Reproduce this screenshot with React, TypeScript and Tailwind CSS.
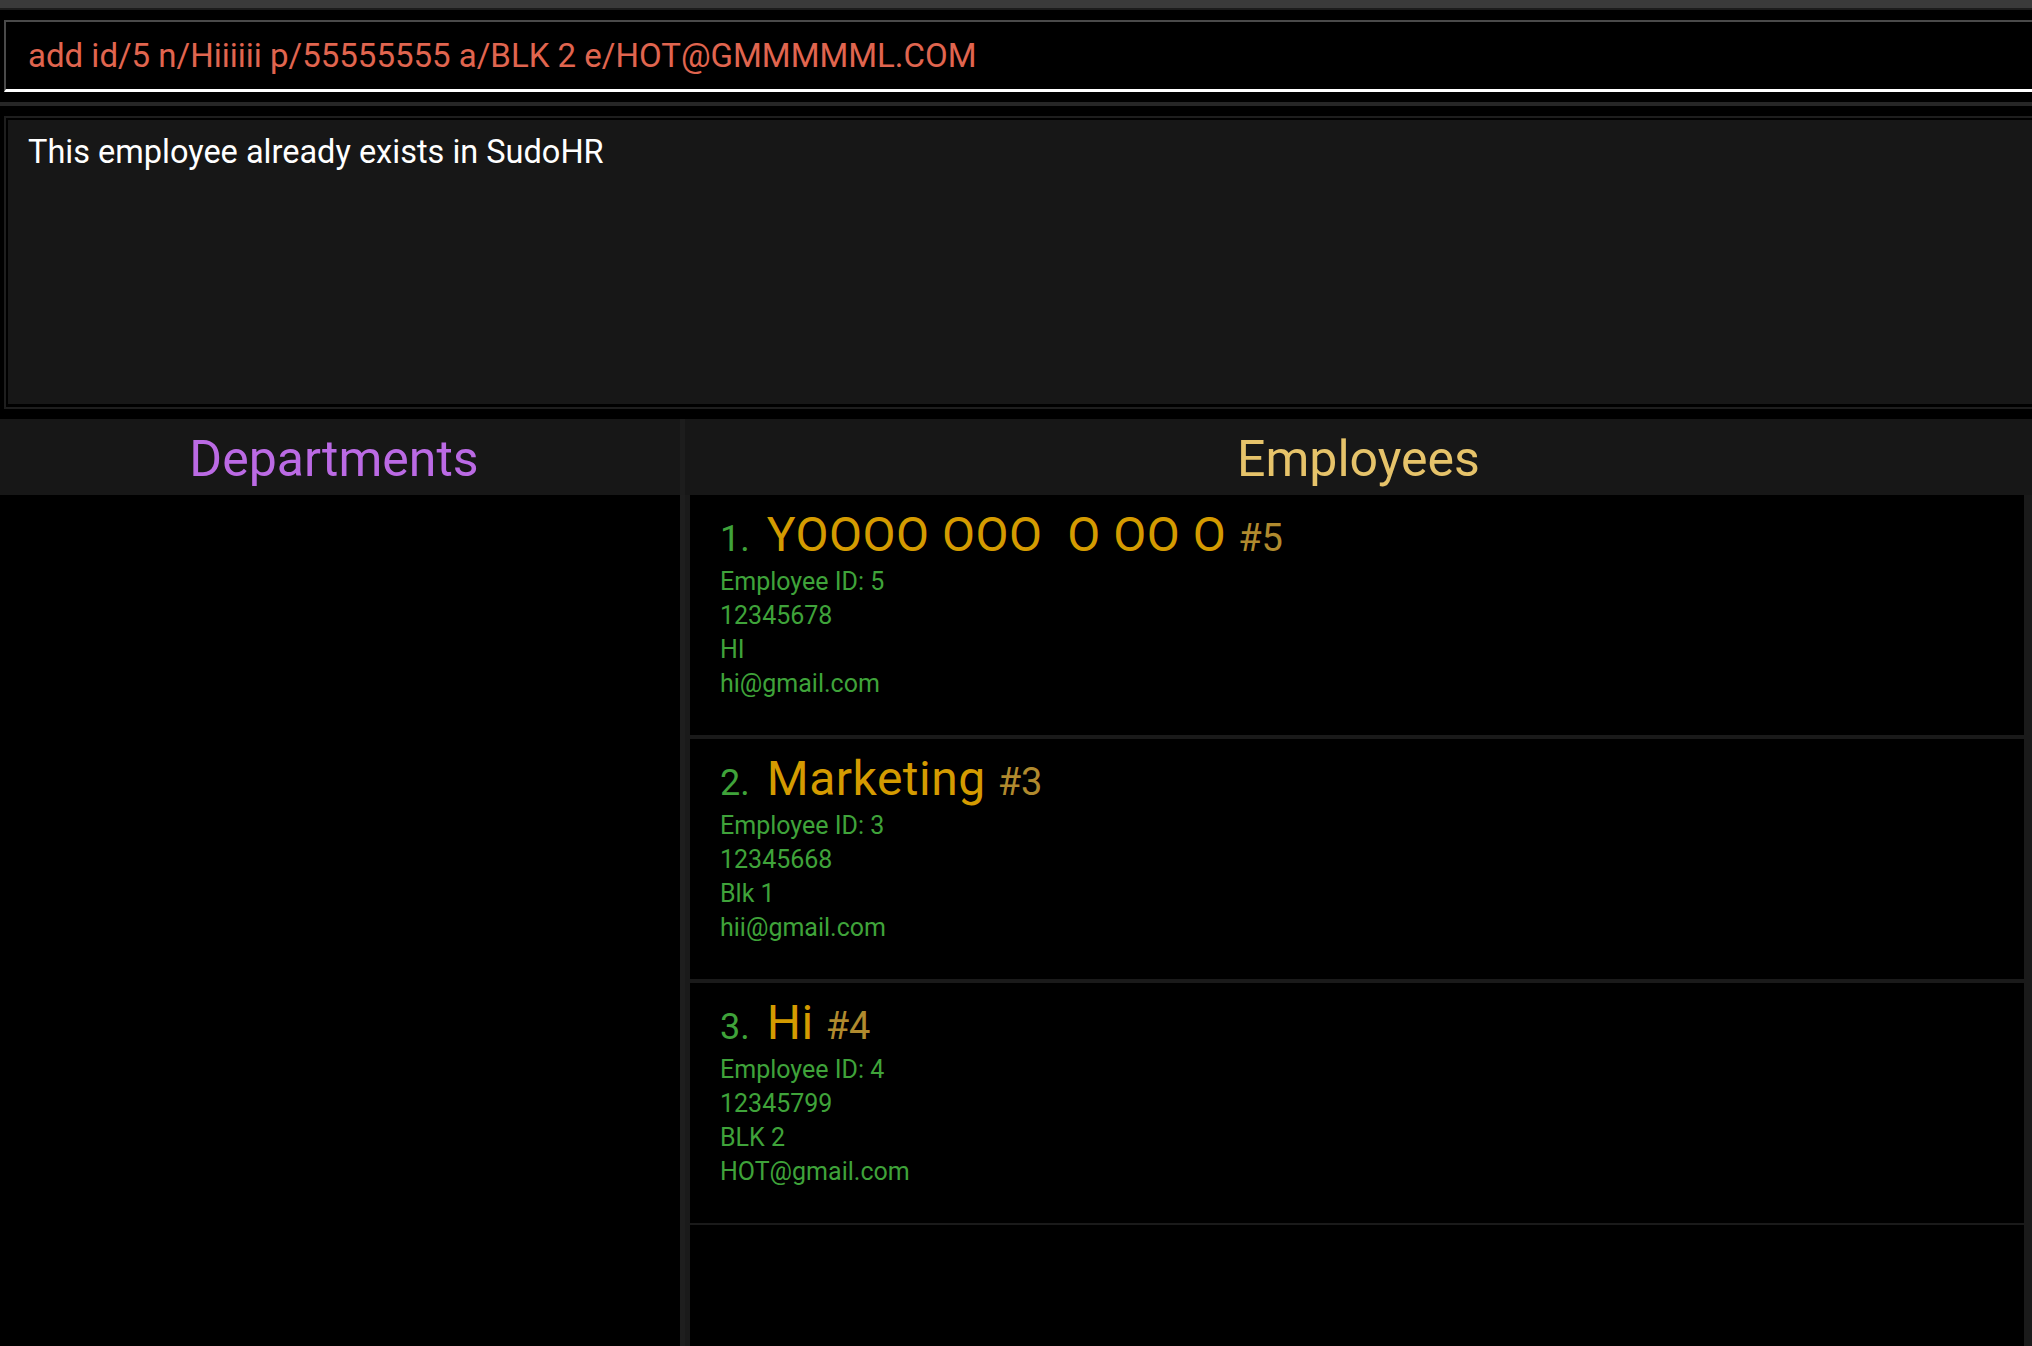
import React from "react";

type Employee = {
  index: number;
  name: string;
  id: number;
  phone: string;
  address: string;
  email: string;
};

const employees: Employee[] = [
  { index: 1, name: "YOOOO OOO  O OO O", id: 5, phone: "12345678", address: "HI", email: "hi@gmail.com" },
  { index: 2, name: "Marketing", id: 3, phone: "12345668", address: "Blk 1", email: "hii@gmail.com" },
  { index: 3, name: "Hi", id: 4, phone: "12345799", address: "BLK 2", email: "HOT@gmail.com" },
];

function EmployeeCard({ emp }: { emp: Employee }) {
  return (
    <div className="h-[240px] shrink-0 bg-black pl-[30px] pt-[12px]">
      <div className="flex items-baseline leading-[56px] whitespace-pre">
        <span className="text-[36px] text-[#3fa33a]">{emp.index}.</span>
        <span className="ml-[17px] text-[48px] tracking-[0.5px] text-[#d49b00]">{emp.name}</span>
        <span className="ml-[12px] text-[38px] text-[#b08a2e]">#{emp.id}</span>
      </div>
      <div className="-mt-[2px] text-[25px] leading-[34px] text-[#3fa33a]">
        <p>Employee ID: {emp.id}</p>
        <p>{emp.phone}</p>
        <p>{emp.address}</p>
        <p>{emp.email}</p>
      </div>
    </div>
  );
}

export default function App() {
  return (
    <div className="flex h-[1346px] w-[2032px] flex-col overflow-hidden bg-black font-['Roboto',sans-serif]">
      {/* top strip */}
      <div className="h-[8px] shrink-0 bg-[#3a3a3a]" />
      <div className="h-[2px] shrink-0 bg-[#1c1c1c]" />

      {/* command box */}
      <div className="shrink-0 pl-[4px] pt-[10px]">
        <div className="flex h-[72px] items-center border-l-2 border-t-2 border-[#4a4a4a] border-b-[3px] border-b-white pl-[22px] text-[33px] text-[#e0654f]">
          add id/5 n/Hiiiiii p/55555555 a/BLK 2 e/HOT@GMMMMML.COM
        </div>
      </div>

      <div className="h-[10px] shrink-0" />
      <div className="h-[4px] shrink-0 bg-[#262626]" />
      <div className="h-[10px] shrink-0" />

      {/* result display */}
      <div className="ml-[4px] shrink-0 border-b-2 border-l-2 border-t-2 border-[#1e1e1e] pb-[3px] pl-[2px] pt-[2px]">
        <div className="h-[284px] bg-[#171717] pl-[20px] pt-[12px] text-[32.5px] leading-[40px] text-white">
          This employee already exists in SudoHR
        </div>
      </div>

      <div className="h-[10px] shrink-0" />

      {/* headers */}
      <div className="flex h-[76px] shrink-0 bg-[#171717]">
        <div className="flex w-[680px] items-center justify-center pr-[12px] pt-[4px] text-[50px] text-[#bb6ae4]">
          Departments
        </div>
        <div className="w-[5px] bg-[#1d1d1d]" />
        <div className="flex flex-1 items-center justify-center pt-[4px] text-[50px] text-[#e6c36a]">
          Employees
        </div>
      </div>

      {/* lists */}
      <div className="flex min-h-0 flex-1">
        <div className="w-[680px] bg-black" />
        <div className="w-[5px] bg-[#1e1e1e]" />
        <div className="flex flex-1 flex-col bg-[#1a1a1a] pl-[5px] pr-[8px]">
          <EmployeeCard emp={employees[0]} />
          <div className="h-[4px] shrink-0" />
          <EmployeeCard emp={employees[1]} />
          <div className="h-[4px] shrink-0" />
          <EmployeeCard emp={employees[2]} />
          <div className="h-[2px] shrink-0" />
          <div className="flex-1 bg-black" />
        </div>
      </div>
    </div>
  );
}
